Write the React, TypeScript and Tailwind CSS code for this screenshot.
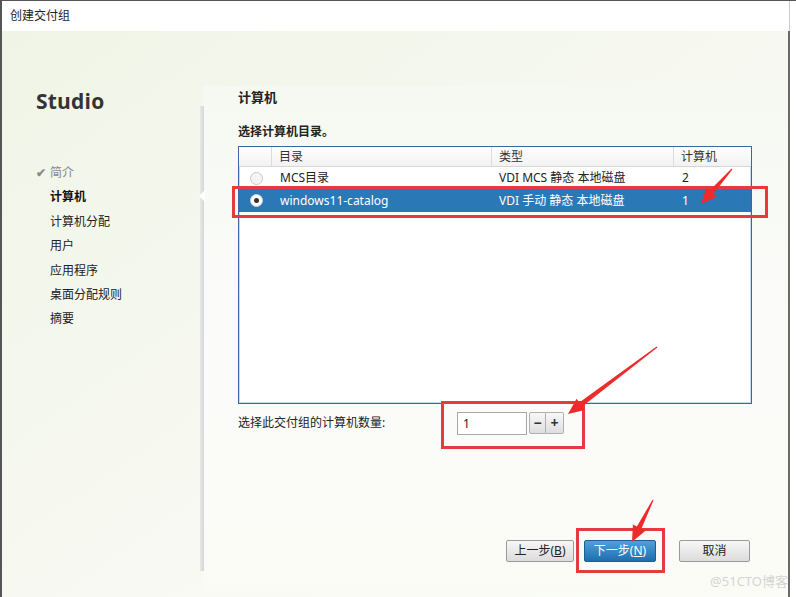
import React from 'react';

const cjk = { fontFamily: '"Noto Sans", "Noto Sans CJK SC", sans-serif' };

type Pt = [number, number];

// red annotation arrow: thin tail that widens into a head at the tip
function arrowPoints(tail: Pt, tip: Pt) {
    const dx = tip[0] - tail[0];
    const dy = tip[1] - tail[1];
    const len = Math.hypot(dx, dy);
    const ux = dx / len;
    const uy = dy / len;
    const nx = -uy;
    const ny = ux;
    const headLen = 16;
    const bx = tip[0] - ux * headLen;
    const by = tip[1] - uy * headLen;
    const p = (x: number, y: number) => `${x.toFixed(1)},${y.toFixed(1)}`;
    return [
        p(tail[0] + nx * 0.6, tail[1] + ny * 0.6),
        p(bx + nx * 2.5, by + ny * 2.5),
        p(bx + nx * 7, by + ny * 7),
        p(tip[0], tip[1]),
        p(bx - nx * 7, by - ny * 7),
        p(bx - nx * 2.5, by - ny * 2.5),
        p(tail[0] - nx * 0.6, tail[1] - ny * 0.6),
    ].join(' ');
}

const navItems = ['简介', '计算机', '计算机分配', '用户', '应用程序', '桌面分配规则', '摘要'];

function Radio({ checked }: { checked?: boolean }) {
    return (
        <span
            className={`inline-flex w-[13px] h-[13px] rounded-full items-center justify-center border ${
                checked ? 'bg-white border-[#d0d0d0]' : 'bg-[#f4f4f4] border-[#c8c8c8]'
            }`}
        >
            {checked && <span className="w-[5px] h-[5px] rounded-full bg-[#333]" />}
        </span>
    );
}

export default function App() {
    return (
        <div
            className="relative w-[796px] h-[597px] overflow-hidden bg-white text-[#222] border-l-2 border-t border-[#555]"
            style={cjk}
        >
            {/* title bar */}
            <div className="h-[30px] flex items-center pl-[8px] text-[12px] bg-white border-r border-[#ccc] mr-[6px]">
                创建交付组
            </div>

            <div className="flex h-[566px] mr-[6px] border-r-2 border-[#6a6a6a] bg-gradient-to-br from-[#f0f4e6] via-[#f7f9f1] to-[#fbfcf7]">
                {/* sidebar */}
                <div className="w-[201px] shrink-0 pl-[34px] pt-[56px]">
                    <div className="text-[21px] font-bold text-[#333] leading-[28px] tracking-[0.2px]" style={{ fontFamily: '"Open Sans", sans-serif' }}>
                        Studio
                    </div>
                    <div className="mt-[49px] flex flex-col gap-[6.4px] text-[12px] leading-[18px]">
                        {navItems.map((item, i) => (
                            <div key={item} className="flex items-center">
                                <span className="w-[14px] text-[#888] text-[12px] font-bold">{i === 0 ? '✔' : ''}</span>
                                <span className={i === 0 ? 'text-[#888]' : i === 1 ? 'font-bold text-[#111]' : 'text-[#222]'}>{item}</span>
                            </div>
                        ))}
                    </div>
                </div>

                {/* content panel */}
                <div className="relative mt-[55px] mb-[6px] w-[582px] bg-gradient-to-b from-[#f6f8f2] via-[#fbfcfa] to-[#fbfbf6]">
                    <div className="absolute left-[-3px] top-[20px] bottom-[20px] w-[4px] bg-gradient-to-r from-[#e8e8e8] to-[#d4d6d8]" />
                    <div className="absolute left-[-4px] top-[104px] w-0 h-0 border-y-[6px] border-y-transparent border-r-[6px] border-r-white" />

                    <div className="pl-[35px] pr-[33px]">
                        <div className="pt-[2px] text-[13px] font-bold leading-[18px]">计算机</div>
                        <div className="mt-[17px] text-[12px] font-bold leading-[18px]">选择计算机目录。</div>

                        {/* catalog table */}
                        <div className="mt-[5px] h-[258px] border border-[#3f63a3] bg-white shadow-[inset_0_0_0_1px_#c8daf0] text-[12px]">
                            <div className="flex h-[20px] leading-[19px] bg-gradient-to-b from-white to-[#f2f2f2] border-b border-[#d6d6d6] text-[#333]">
                                <div className="w-[33px] border-r border-[#dcdcdc]" />
                                <div className="w-[220px] pl-[7px] border-r border-[#dcdcdc]">目录</div>
                                <div className="w-[182px] pl-[7px] border-r border-[#dcdcdc]">类型</div>
                                <div className="flex-1 pl-[7px]">计算机</div>
                            </div>
                            <div className="flex h-[22px] items-center text-[#222]">
                                <div className="w-[33px] flex justify-center pl-[2px]"><Radio /></div>
                                <div className="w-[220px] pl-[8px]">MCS目录</div>
                                <div className="w-[182px] pl-[7px]">VDI MCS 静态 本地磁盘</div>
                                <div className="flex-1 pl-[8px]">2</div>
                            </div>
                            <div className="flex h-[23px] items-center bg-[#2a79b6] text-white">
                                <div className="w-[33px] flex justify-center pl-[2px]"><Radio checked /></div>
                                <div className="w-[220px] pl-[8px]">windows11-catalog</div>
                                <div className="w-[182px] pl-[7px]">VDI 手动 静态 本地磁盘</div>
                                <div className="flex-1 pl-[8px]">1</div>
                            </div>
                        </div>

                        {/* machine count */}
                        <div className="mt-[7px] flex items-center h-[24px] text-[12px]">
                            <span className="w-[219px]">选择此交付组的计算机数量:</span>
                            <div className="w-[70px] h-[23px] border border-[#a8a8a8] bg-white pl-[5px] leading-[21px]">1</div>
                            <div className="ml-[2px] flex">
                                <button className="w-[17px] h-[22px] border border-[#b0b0b0] rounded-l-[2px] bg-gradient-to-b from-[#f8f8f8] to-[#dedede] text-[14px] font-bold leading-[18px] text-[#333]">−</button>
                                <button className="w-[18px] h-[22px] border border-l-0 border-[#b0b0b0] rounded-r-[2px] bg-gradient-to-b from-[#f8f8f8] to-[#dedede] text-[14px] font-bold leading-[18px] text-[#333]">+</button>
                            </div>
                        </div>

                        {/* footer buttons */}
                        <div className="mt-[105px] flex text-[12px]">
                            <button className="ml-[268px] w-[68px] h-[22px] shrink-0 border border-[#9a9a9a] rounded-[2px] bg-gradient-to-b from-[#f7f7f7] to-[#dcdcdc] text-[#222]">上一步(<u>B</u>)</button>
                            <button className="ml-[10px] w-[72px] h-[22px] shrink-0 border border-[#1c5d93] rounded-[2px] bg-gradient-to-b from-[#4fa0dc] to-[#1d6fae] text-white">下一步(<u>N</u>)</button>
                            <button className="ml-[23px] w-[71px] h-[22px] shrink-0 border border-[#9a9a9a] rounded-[2px] bg-gradient-to-b from-[#f7f7f7] to-[#dcdcdc] text-[#222]">取消</button>
                        </div>
                    </div>
                </div>
            </div>

            {/* annotations */}
            <div className="absolute left-[230px] top-[185px] w-[536px] h-[32px] border-[3px] border-[#e53a3f]" />
            <div className="absolute left-[439px] top-[400px] w-[144px] h-[48px] border-[3px] border-[#e53a3f]" />
            <div className="absolute left-[574px] top-[527px] w-[89px] h-[45px] border-[3px] border-[#e53a3f]" />
            <svg className="absolute left-0 top-0 pointer-events-none" width="796" height="597">
                <polygon points={arrowPoints([730, 168], [699, 203])} fill="#ee2b2b" />
                <polygon points={arrowPoints([655, 346], [566, 413])} fill="#ee2b2b" />
                <polygon points={arrowPoints([651, 499], [630, 541])} fill="#ee2b2b" />
            </svg>

            <div className="absolute right-[8px] bottom-[6px] text-[13px] text-[#d4d4d4]">@51CTO博客</div>
        </div>
    );
}
